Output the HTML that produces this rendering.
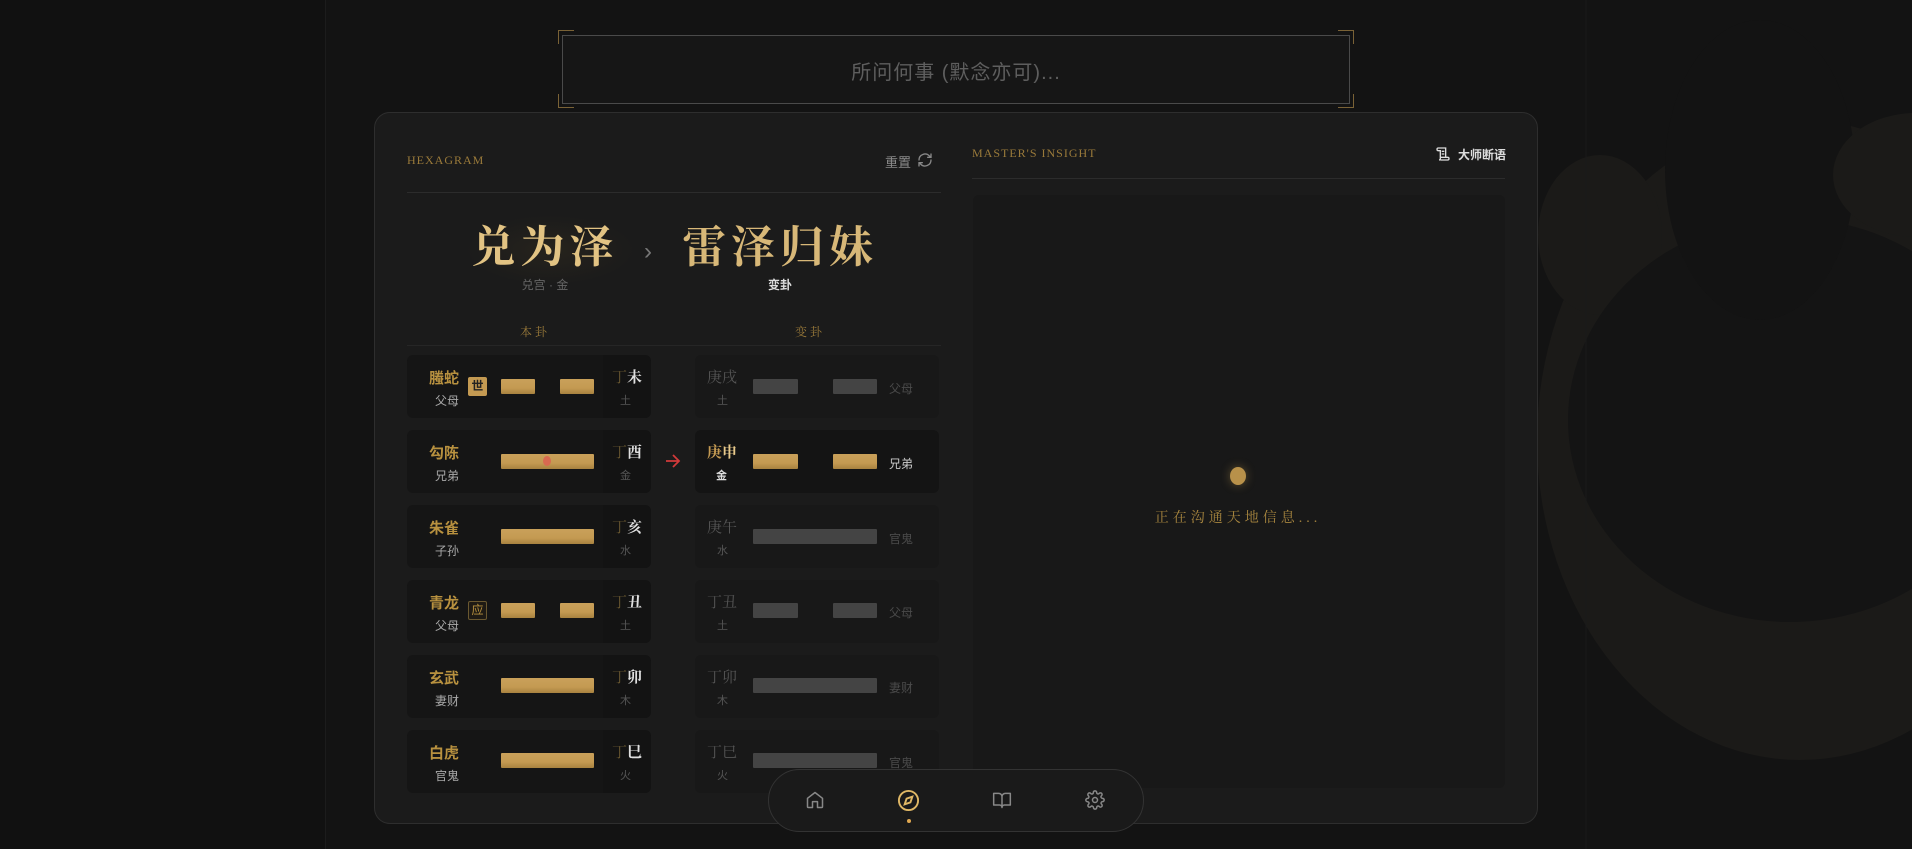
<!DOCTYPE html>
<html><head><meta charset="utf-8"><style>
*{margin:0;padding:0;box-sizing:border-box}
body{width:1912px;height:849px;overflow:hidden;background:#131313;font-family:"Liberation Sans","Noto Sans CJK SC",sans-serif;position:relative}
.a{position:absolute}
.serif{font-family:"Liberation Serif","Noto Serif CJK SC",serif}
.card{position:absolute;height:63px;background:#151515;border-radius:6px}
.nm{position:absolute;color:#b8913f;font-size:15px;font-weight:bold;width:40px;text-align:center}
.sb{position:absolute;color:#aaa;font-size:12px;width:40px;text-align:center}
.bar{position:absolute;height:15px;border-radius:1px;background:linear-gradient(#c9a05a,#c49a52 60%,#a8823f)}
.gb{position:absolute;height:15px;border-radius:1px;background:#444}
.dz{position:absolute;font-size:15px;font-family:"Liberation Serif","Noto Serif CJK SC",serif}
</style></head><body>
<!-- background -->
<div class="a" style="left:0;top:0;width:326px;height:849px;background:#111;border-right:1px solid #1c1c1c"></div>
<svg class="a" style="left:0;top:0" width="1912" height="849">
<ellipse cx="1800" cy="440" rx="263" ry="320" fill="#1b1a18"/>
<ellipse cx="1600" cy="235" rx="62" ry="80" fill="#1b1a18"/>
<ellipse cx="1790" cy="420" rx="222" ry="202" fill="#141414"/>
<ellipse cx="1760" cy="170" rx="95" ry="150" fill="#131313"/>
<ellipse cx="1915" cy="175" rx="82" ry="62" fill="#1b1a18"/>
<line x1="1586" y1="0" x2="1586" y2="849" stroke="#1a1a1a"/>
</svg>
<!-- search box -->
<div class="a" style="left:562px;top:35px;width:788px;height:69px;border:1px solid #4a4a4a;background:#161616"></div>
<div class="a" style="left:558px;top:30px;width:16px;height:14px;border-left:1px solid #7a6236;border-top:1px solid #7a6236"></div>
<div class="a" style="left:1338px;top:30px;width:16px;height:14px;border-right:1px solid #7a6236;border-top:1px solid #7a6236"></div>
<div class="a" style="left:558px;top:94px;width:16px;height:14px;border-left:1px solid #7a6236;border-bottom:1px solid #7a6236"></div>
<div class="a" style="left:1338px;top:94px;width:16px;height:14px;border-right:1px solid #7a6236;border-bottom:1px solid #7a6236"></div>
<div class="a" style="left:562px;top:56px;width:788px;text-align:center;color:#5e5e5e;font-size:20px;letter-spacing:1px">所问何事 (默念亦可)...</div>
<!-- main panel -->
<div class="a" style="left:374px;top:112px;width:1164px;height:712px;background:#1b1b1b;border:1px solid #2e2e2e;border-radius:16px"></div>
<div class="a serif" style="left:407px;top:153px;color:#9a7a3a;font-size:12px;letter-spacing:1px">HEXAGRAM</div>
<div class="a" style="left:885px;top:152px;color:#8a8a8a;font-size:13px">重置</div>
<svg class="a" style="left:917px;top:152px" width="16" height="16" viewBox="0 0 24 24" fill="none" stroke="#888" stroke-width="2" stroke-linecap="round"><path d="M21 12a9 9 0 0 1-15.5 6.2L3 16M3 12a9 9 0 0 1 15.5-6.2L21 8M21 3v5h-5M3 21v-5h5"/></svg>
<div class="a" style="left:407px;top:192px;width:534px;height:1px;background:#2c2c2c"></div>
<div class="a" style="left:465px;top:215px;width:170px;height:70px;background:radial-gradient(ellipse,rgba(60,50,30,.35),transparent 70%)"></div>
<div class="a serif" style="left:470px;top:220px;width:150px;text-align:center;font-size:44px;font-weight:bold;color:#e2c383;letter-spacing:5px;line-height:56px">兑为泽</div>
<div class="a" style="left:470px;top:276px;width:150px;text-align:center;font-size:12px;color:#666">兑宫 · 金</div>
<div class="a" style="left:644px;top:238px;color:#777;font-size:24px">›</div>
<div class="a serif" style="left:680px;top:220px;width:200px;text-align:center;font-size:44px;font-weight:bold;color:#d8b878;letter-spacing:5px;line-height:56px">雷泽归妹</div>
<div class="a" style="left:680px;top:276px;width:200px;text-align:center;font-size:12px;color:#ddd;font-weight:bold">变卦</div>
<div class="a serif" style="left:505px;top:323px;width:60px;text-align:center;font-size:12px;color:#9a7a3a;letter-spacing:3px">本卦</div>
<div class="a serif" style="left:780px;top:323px;width:60px;text-align:center;font-size:12px;color:#9a7a3a;letter-spacing:3px">变卦</div>
<div class="a" style="left:407px;top:345px;width:534px;height:1px;background:#262626"></div>

<!-- Row 1 -->
<div class="card" style="left:407px;top:355px;width:244px"></div><div class="a" style="left:603px;top:355px;width:48px;height:63px;background:#131313;border-radius:0 6px 6px 0"></div>
<div class="nm" style="left:424px;top:367px">螣蛇</div><div class="sb" style="left:427px;top:392px">父母</div>
<div class="a" style="left:468px;top:377px;width:19px;height:19px;background:#c49a52;border-radius:2px;color:#222;font-size:12px;text-align:center;line-height:19px;font-weight:bold">世</div>
<div class="bar" style="left:501px;top:379px;width:34px"></div><div class="bar" style="left:560px;top:379px;width:34px"></div>
<div class="dz" style="left:612px;top:366px;color:#6a5830">丁</div><div class="dz" style="left:627px;top:366px;color:#e0e0e0;font-weight:bold">未</div><div class="a" style="left:620px;top:392px;font-size:11px;color:#555">土</div>
<div class="card" style="left:695px;top:355px;width:244px;background:#181818"></div>
<div class="dz" style="left:707px;top:366px;color:#555">庚戌</div><div class="a" style="left:717px;top:392px;font-size:11px;color:#555">土</div>
<div class="gb" style="left:753px;top:379px;width:45px"></div><div class="gb" style="left:833px;top:379px;width:44px"></div>
<div class="a" style="left:889px;top:380px;font-size:12px;color:#4a4a4a">父母</div>
<!-- Row 2 -->
<div class="card" style="left:407px;top:430px;width:244px"></div><div class="a" style="left:603px;top:430px;width:48px;height:63px;background:#131313;border-radius:0 6px 6px 0"></div>
<div class="nm" style="left:424px;top:442px">勾陈</div><div class="sb" style="left:427px;top:467px">兄弟</div>
<div class="bar" style="left:501px;top:454px;width:93px"></div><div class="a" style="left:543px;top:456px;width:8px;height:10px;border-radius:50%;background:#d86a50"></div>
<div class="dz" style="left:612px;top:441px;color:#6a5830">丁</div><div class="dz" style="left:627px;top:441px;color:#e0e0e0;font-weight:bold">酉</div><div class="a" style="left:620px;top:467px;font-size:11px;color:#555">金</div>
<svg class="a" style="left:665px;top:453px" width="16" height="16" viewBox="0 0 16 16" fill="none" stroke="#d23a3a" stroke-width="1.8"><path d="M1 8h13M8 2l6 6-6 6"/></svg>
<div class="card" style="left:695px;top:430px;width:244px;background:#141414"></div>
<div class="dz" style="left:707px;top:441px;color:#c49a52;font-weight:bold">庚<span style="color:#e8c98a">申</span></div><div class="a" style="left:716px;top:467px;font-size:11px;color:#ddd;font-weight:bold">金</div>
<div class="bar" style="left:753px;top:454px;width:45px"></div><div class="bar" style="left:833px;top:454px;width:44px"></div>
<div class="a" style="left:889px;top:455px;font-size:12px;color:#ccc">兄弟</div>
<!-- Row 3 -->
<div class="card" style="left:407px;top:505px;width:244px"></div><div class="a" style="left:603px;top:505px;width:48px;height:63px;background:#131313;border-radius:0 6px 6px 0"></div>
<div class="nm" style="left:424px;top:517px">朱雀</div><div class="sb" style="left:427px;top:542px">子孙</div>
<div class="bar" style="left:501px;top:529px;width:93px"></div>
<div class="dz" style="left:612px;top:516px;color:#6a5830">丁</div><div class="dz" style="left:627px;top:516px;color:#e0e0e0;font-weight:bold">亥</div><div class="a" style="left:620px;top:542px;font-size:11px;color:#555">水</div>
<div class="card" style="left:695px;top:505px;width:244px;background:#181818"></div>
<div class="dz" style="left:707px;top:516px;color:#555">庚午</div><div class="a" style="left:717px;top:542px;font-size:11px;color:#555">水</div>
<div class="gb" style="left:753px;top:529px;width:124px"></div>
<div class="a" style="left:889px;top:530px;font-size:12px;color:#4a4a4a">官鬼</div>
<!-- Row 4 -->
<div class="card" style="left:407px;top:580px;width:244px"></div><div class="a" style="left:603px;top:580px;width:48px;height:63px;background:#131313;border-radius:0 6px 6px 0"></div>
<div class="nm" style="left:424px;top:592px">青龙</div><div class="sb" style="left:427px;top:617px">父母</div>
<div class="a" style="left:468px;top:601px;width:19px;height:19px;border:1px solid #6a5830;background:#1e1a14;border-radius:2px;color:#b8913f;font-size:12px;text-align:center;line-height:17px">应</div>
<div class="bar" style="left:501px;top:603px;width:34px"></div><div class="bar" style="left:560px;top:603px;width:34px"></div>
<div class="dz" style="left:612px;top:591px;color:#6a5830">丁</div><div class="dz" style="left:627px;top:591px;color:#e0e0e0;font-weight:bold">丑</div><div class="a" style="left:620px;top:617px;font-size:11px;color:#555">土</div>
<div class="card" style="left:695px;top:580px;width:244px;background:#181818"></div>
<div class="dz" style="left:707px;top:591px;color:#555">丁丑</div><div class="a" style="left:717px;top:617px;font-size:11px;color:#555">土</div>
<div class="gb" style="left:753px;top:603px;width:45px"></div><div class="gb" style="left:833px;top:603px;width:44px"></div>
<div class="a" style="left:889px;top:604px;font-size:12px;color:#4a4a4a">父母</div>
<!-- Row 5 -->
<div class="card" style="left:407px;top:655px;width:244px"></div><div class="a" style="left:603px;top:655px;width:48px;height:63px;background:#131313;border-radius:0 6px 6px 0"></div>
<div class="nm" style="left:424px;top:667px">玄武</div><div class="sb" style="left:427px;top:692px">妻财</div>
<div class="bar" style="left:501px;top:678px;width:93px"></div>
<div class="dz" style="left:612px;top:666px;color:#6a5830">丁</div><div class="dz" style="left:627px;top:666px;color:#e0e0e0;font-weight:bold">卯</div><div class="a" style="left:620px;top:692px;font-size:11px;color:#555">木</div>
<div class="card" style="left:695px;top:655px;width:244px;background:#181818"></div>
<div class="dz" style="left:707px;top:666px;color:#555">丁卯</div><div class="a" style="left:717px;top:692px;font-size:11px;color:#555">木</div>
<div class="gb" style="left:753px;top:678px;width:124px"></div>
<div class="a" style="left:889px;top:679px;font-size:12px;color:#4a4a4a">妻财</div>
<!-- Row 6 -->
<div class="card" style="left:407px;top:730px;width:244px"></div><div class="a" style="left:603px;top:730px;width:48px;height:63px;background:#131313;border-radius:0 6px 6px 0"></div>
<div class="nm" style="left:424px;top:742px">白虎</div><div class="sb" style="left:427px;top:767px">官鬼</div>
<div class="bar" style="left:501px;top:753px;width:93px"></div>
<div class="dz" style="left:612px;top:741px;color:#6a5830">丁</div><div class="dz" style="left:627px;top:741px;color:#e0e0e0;font-weight:bold">巳</div><div class="a" style="left:620px;top:767px;font-size:11px;color:#555">火</div>
<div class="card" style="left:695px;top:730px;width:244px;background:#181818"></div>
<div class="dz" style="left:707px;top:741px;color:#555">丁巳</div><div class="a" style="left:717px;top:767px;font-size:11px;color:#555">火</div>
<div class="gb" style="left:753px;top:753px;width:124px"></div>
<div class="a" style="left:889px;top:754px;font-size:12px;color:#4a4a4a">官鬼</div>

<!-- insight -->
<div class="a serif" style="left:972px;top:146px;color:#9a7a3a;font-size:12px;letter-spacing:1px">MASTER'S INSIGHT</div>
<svg class="a" style="left:1435px;top:146px" width="16" height="16" viewBox="0 0 24 24" fill="none" stroke="#ddd" stroke-width="2"><path d="M8 21h11a2 2 0 0 0 0-4H8M5 3h11v14M5 3a2 2 0 0 0 0 4h3v12a2 2 0 0 1-2 2M10 8h4M10 12h4"/></svg>
<div class="a" style="left:1458px;top:146px;color:#ddd;font-size:12px;font-weight:bold">大师断语</div>
<div class="a" style="left:972px;top:178px;width:533px;height:1px;background:#2c2c2c"></div>
<div class="a" style="left:973px;top:195px;width:532px;height:593px;background:#181818;border-radius:6px"></div>
<div class="a" style="left:1230px;top:467px;width:16px;height:18px;border-radius:50%;background:#b8914a;box-shadow:0 0 10px rgba(200,160,80,.4)"></div>
<div class="a serif" style="left:1100px;top:507px;width:276px;text-align:center;color:#a8863f;font-size:14px;letter-spacing:4px">正在沟通天地信息...</div>

<!-- nav -->
<div class="a" style="left:768px;top:769px;width:376px;height:63px;background:#1a1a1a;border:1px solid #333;border-radius:32px"></div>
<svg class="a" style="left:805px;top:790px" width="20" height="20" viewBox="0 0 24 24" fill="none" stroke="#888" stroke-width="1.8" stroke-linejoin="round"><path d="M3 10l9-7 9 7v10a1 1 0 0 1-1 1h-5v-7H9v7H4a1 1 0 0 1-1-1z"/></svg>
<svg class="a" style="left:897px;top:789px" width="23" height="23" viewBox="0 0 24 24" fill="none" stroke="#e0b866" stroke-width="2"><circle cx="12" cy="12" r="10"/><path d="M16 8l-2 6-6 2 2-6z"/></svg>
<div class="a" style="left:907px;top:819px;width:4px;height:4px;border-radius:50%;background:#e0a850"></div>
<svg class="a" style="left:992px;top:790px" width="20" height="20" viewBox="0 0 24 24" fill="none" stroke="#888" stroke-width="1.8" stroke-linejoin="round"><path d="M2 4h6a4 4 0 0 1 4 4v13a3 3 0 0 0-3-3H2zM22 4h-6a4 4 0 0 0-4 4v13a3 3 0 0 1 3-3h7z"/></svg>
<svg class="a" style="left:1085px;top:790px" width="20" height="20" viewBox="0 0 24 24" fill="none" stroke="#888" stroke-width="1.8"><circle cx="12" cy="12" r="3"/><path d="M19.4 15a1.7 1.7 0 0 0 .3 1.8l.1.1a2 2 0 1 1-2.8 2.8l-.1-.1a1.7 1.7 0 0 0-1.8-.3 1.7 1.7 0 0 0-1 1.5V21a2 2 0 1 1-4 0v-.1a1.7 1.7 0 0 0-1.100-1.5 1.7 1.7 0 0 0-1.8.3l-.1.1a2 2 0 1 1-2.8-2.8l.1-.1a1.7 1.7 0 0 0 .3-1.8 1.7 1.7 0 0 0-1.5-1H3a2 2 0 1 1 0-4h.1a1.7 1.7 0 0 0 1.5-1.1 1.7 1.7 0 0 0-.3-1.8l-.1-.1a2 2 0 1 1 2.8-2.8l.1.1a1.7 1.7 0 0 0 1.8.3H9a1.7 1.7 0 0 0 1-1.5V3a2 2 0 1 1 4 0v.1a1.7 1.7 0 0 0 1 1.5 1.7 1.7 0 0 0 1.8-.3l.1-.1a2 2 0 1 1 2.8 2.8l-.1.1a1.7 1.7 0 0 0-.3 1.8V9a1.7 1.7 0 0 0 1.5 1H21a2 2 0 1 1 0 4h-.1a1.7 1.7 0 0 0-1.5 1z"/></svg>
</body></html>
